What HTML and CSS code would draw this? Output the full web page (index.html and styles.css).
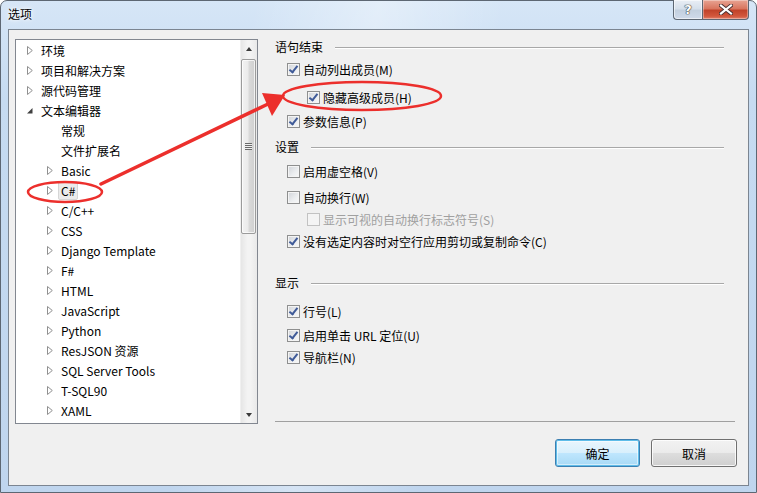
FILE: index.html
```html
<!DOCTYPE html>
<html lang="zh-CN">
<head>
<meta charset="utf-8">
<title>选项</title>
<link rel="stylesheet" href="styles.css">
</head>
<body>
<div class="window">
  <div class="titlebar">
    <span class="title">选项</span>
    <div class="caption-btns">
      <div class="cap-btn help"><span>?</span></div>
      <div class="cap-btn close">
        <svg width="14" height="11" viewBox="0 0 14 11"><path d="M2 1.5 L12 9.5 M12 1.5 L2 9.5" stroke="#4a3030" stroke-width="4" stroke-linecap="square"/><path d="M2 1.5 L12 9.5 M12 1.5 L2 9.5" stroke="#ffffff" stroke-width="2.2" stroke-linecap="square"/></svg>
      </div>
    </div>
  </div>
  <div class="client">
    <div class="tree">
      <div class="tree-list">
        <div class="node l1"><span class="tg"></span><span class="lbl">环境</span></div>
        <div class="node l1"><span class="tg"></span><span class="lbl">项目和解决方案</span></div>
        <div class="node l1"><span class="tg"></span><span class="lbl">源代码管理</span></div>
        <div class="node l1"><span class="tg open"></span><span class="lbl">文本编辑器</span></div>
        <div class="node l2"><span class="tg none"></span><span class="lbl">常规</span></div>
        <div class="node l2"><span class="tg none"></span><span class="lbl">文件扩展名</span></div>
        <div class="node l2"><span class="tg"></span><span class="lbl">Basic</span></div>
        <div class="node l2"><span class="tg"></span><span class="lbl sel">C#</span></div>
        <div class="node l2"><span class="tg"></span><span class="lbl">C/C++</span></div>
        <div class="node l2"><span class="tg"></span><span class="lbl">CSS</span></div>
        <div class="node l2"><span class="tg"></span><span class="lbl">Django Template</span></div>
        <div class="node l2"><span class="tg"></span><span class="lbl">F#</span></div>
        <div class="node l2"><span class="tg"></span><span class="lbl">HTML</span></div>
        <div class="node l2"><span class="tg"></span><span class="lbl">JavaScript</span></div>
        <div class="node l2"><span class="tg"></span><span class="lbl">Python</span></div>
        <div class="node l2"><span class="tg"></span><span class="lbl">ResJSON 资源</span></div>
        <div class="node l2"><span class="tg"></span><span class="lbl">SQL Server Tools</span></div>
        <div class="node l2"><span class="tg"></span><span class="lbl">T-SQL90</span></div>
        <div class="node l2"><span class="tg"></span><span class="lbl">XAML</span></div>
      </div>
      <div class="vscroll">
        <div class="sarrow up"></div>
        <div class="strack">
          <div class="thumb"><span class="grip"></span></div>
        </div>
        <div class="sarrow down"></div>
      </div>
    </div>

    <div class="pane">
      <div class="group-head g1"><span>语句结束</span><i></i></div>
      <div class="opt m4"><span class="cb on"></span><span>自动列出成员(M)</span></div>
      <div class="opt sub m8"><span class="cb on"></span><span>隐藏高级成员(H)</span></div>
      <div class="opt m4"><span class="cb on"></span><span>参数信息(P)</span></div>

      <div class="group-head m8"><span>设置</span><i></i></div>
      <div class="opt m6"><span class="cb"></span><span>启用虚空格(V)</span></div>
      <div class="opt m6"><span class="cb"></span><span>自动换行(W)</span></div>
      <div class="opt sub dis m2"><span class="cb"></span><span>显示可视的自动换行标志符号(S)</span></div>
      <div class="opt m2"><span class="cb on"></span><span>没有选定内容时对空行应用剪切或复制命令(C)</span></div>

      <div class="group-head m24"><span>显示</span><i></i></div>
      <div class="opt m10"><span class="cb on"></span><span>行号(L)</span></div>
      <div class="opt m4"><span class="cb on"></span><span>启用单击 URL 定位(U)</span></div>
      <div class="opt m2"><span class="cb on"></span><span>导航栏(N)</span></div>

      <div class="sep"></div>
      <div class="buttons">
        <div class="btn default">确定</div>
        <div class="btn">取消</div>
      </div>
    </div>
  </div>

  <svg class="annot" width="757" height="493" viewBox="0 0 757 493">
    <ellipse cx="65" cy="192" rx="37" ry="10" fill="none" stroke="#ec2f2c" stroke-width="2.5"/>
    <ellipse cx="362" cy="96" rx="79" ry="14" fill="none" stroke="#ec2f2c" stroke-width="2.5"/>
    <line x1="101" y1="184" x2="268" y2="104" stroke="#ec2f2c" stroke-width="3.5" stroke-linecap="round"/>
    <polygon points="285,95 262,93 272,116" fill="#ec2f2c"/>
  </svg>
</div>
</body>
</html>
```

FILE: styles.css
```css
* { box-sizing: border-box; }

html, body {
  margin: 0;
  padding: 0;
}

body {
  width: 757px;
  height: 493px;
  overflow: hidden;
  font-family: "Noto Sans CJK SC", "Microsoft YaHei", sans-serif;
  font-size: 12px;
  color: #000;
  background: #ffffff;
}

.window {
  position: relative;
  width: 757px;
  height: 493px;
  display: flex;
  flex-direction: column;
  border: 1px solid #5d6773;
  border-radius: 7px 7px 0 0;
  background:
    linear-gradient(100deg, rgba(255,255,255,0) 30%, rgba(255,255,255,0.35) 45%, rgba(255,255,255,0) 60%),
    linear-gradient(180deg, #d6e6f7 0%, #c6dbf1 20%, #bfd5ee 100%);
}

/* ---------- title bar ---------- */
.titlebar {
  height: 28px;
  display: flex;
  align-items: flex-start;
}

.title {
  margin: 5px 0 0 7px;
  line-height: 16px;
  font-size: 12px;
  color: #000;
  text-shadow: 0 0 6px #ffffff, 0 0 3px #ffffff;
}

.caption-btns {
  margin-left: auto;
  margin-right: 7px;
  margin-top: -1px;
  display: flex;
}

.cap-btn {
  height: 20px;
  display: flex;
  align-items: center;
  justify-content: center;
  border: 1px solid #5d6773;
  border-top: none;
}

.cap-btn.help {
  width: 29px;
  border-right: none;
  border-radius: 0 0 0 4px;
  background: linear-gradient(180deg, #e9eef5 0%, #d6e0eb 45%, #c3d0df 55%, #cfdaea 100%);
  box-shadow: inset 0 0 0 1px rgba(255,255,255,0.55);
}

.cap-btn.help span {
  font-family: "DejaVu Sans", sans-serif;
  font-weight: bold;
  font-size: 13px;
  color: #ffffff;
  text-shadow: 0 0 1px #333, 0 0 1px #333, 0 0 1px #333;
  line-height: 1;
}

.cap-btn.close {
  width: 47px;
  border-radius: 0 0 4px 0;
  background: linear-gradient(180deg, #e8a493 0%, #d9765f 45%, #c1432a 55%, #d2573c 85%, #e0806a 100%);
  box-shadow: inset 0 0 0 1px rgba(255,255,255,0.35);
}

/* ---------- client area ---------- */
.client {
  margin: 0 7px;
  height: 457px;
  display: flex;
  align-items: flex-start;
  padding: 9px 0 0 6px;
  gap: 17px;
  background: #f0f0f0;
  border: 1px solid #7b8591;
}

/* ---------- tree ---------- */
.tree {
  width: 243px;
  height: 385px;
  display: flex;
  border: 1px solid #828790;
  background: #ffffff;
}

.tree-list {
  flex: 1;
  padding-top: 0;
}

.node {
  height: 20px;
  display: flex;
  align-items: center;
  white-space: nowrap;
}

.node.l1 { padding-left: 11px; }
.node.l2 { padding-left: 31px; }

.tg {
  width: 6px;
  height: 9px;
  margin-right: 7px;
  flex: none;
  background: no-repeat center / 6px 9px url("data:image/svg+xml,%3Csvg xmlns='http://www.w3.org/2000/svg' width='6' height='9' viewBox='0 0 6 9'%3E%3Cpath d='M0.5 0.5 L5.3 4.5 L0.5 8.5 Z' fill='white' stroke='%23909090'/%3E%3C/svg%3E");
}

.tg.open {
  background: no-repeat center / 6px 9px url("data:image/svg+xml,%3Csvg xmlns='http://www.w3.org/2000/svg' width='6' height='9' viewBox='0 0 6 9'%3E%3Cpath d='M5.5 2 L5.5 7.5 L0 7.5 Z' fill='%23404040'/%3E%3C/svg%3E");
}

.tg.none { background: none; }

.lbl {
  line-height: 17px;
  padding: 0 2px;
  margin-left: -2px;
  border: 1px solid transparent;
}

.lbl.sel {
  background: #ebebeb;
  border-color: #d6d6d6;
  border-radius: 2px;
}

/* scrollbar */
.vscroll {
  width: 17px;
  height: 100%;
  display: flex;
  flex-direction: column;
  background: linear-gradient(90deg, #e6e6e6, #f3f3f3 40%, #f3f3f3 60%, #e9e9e9);
  border-left: 1px solid #f0f0f0;
}

.sarrow {
  height: 17px;
  display: flex;
  align-items: center;
  justify-content: center;
}

.sarrow::before {
  content: "";
  width: 0;
  height: 0;
  border-left: 3.5px solid transparent;
  border-right: 3.5px solid transparent;
}

.sarrow.up::before { border-bottom: 4px solid #3a3a3a; }
.sarrow.down::before { border-top: 4px solid #3a3a3a; }

.strack {
  flex: 1;
  padding-top: 2px;
}

.thumb {
  margin: 0 1px 0 0;
  height: 175px;
  display: flex;
  align-items: center;
  justify-content: center;
  border: 1px solid #9b9b9b;
  border-radius: 2px;
  background: linear-gradient(90deg, #f2f2f2 0%, #ebebeb 45%, #d9d9d9 55%, #cfcfcf 100%);
  box-shadow: inset 0 0 0 1px rgba(255,255,255,0.7);
}

.grip {
  width: 7px;
  height: 7px;
  background: repeating-linear-gradient(180deg, #6a6a6a 0 1px, #f0f0f0 1px 2px);
}

/* ---------- right pane ---------- */
.pane {
  width: 462px;
  display: flex;
  flex-direction: column;
}

.group-head {
  height: 16px;
  display: flex;
  align-items: center;
  line-height: 16px;
}

.group-head.g1 { margin-top: 0; }

.group-head i {
  flex: 1;
  margin: 1px 13px 0 12px;
  height: 2px;
  border-top: 1px solid #a8a8a8;
  border-bottom: 1px solid #ffffff;
}

.opt {
  height: 20px;
  display: flex;
  align-items: center;
  padding-left: 12px;
  white-space: nowrap;
}

.opt.sub { padding-left: 32px; }

.opt.dis { color: #a0a0a0; }

.m2 { margin-top: 2px; }
.m4 { margin-top: 4px; }
.m6 { margin-top: 6px; }
.m8 { margin-top: 8px; }
.m10 { margin-top: 10px; }
.m24 { margin-top: 24px; }

.cb {
  position: relative;
  width: 13px;
  height: 13px;
  margin-right: 3px;
  flex: none;
  border: 1px solid #8e8f8f;
  background: linear-gradient(135deg, #d0d3d8 0%, #eceef0 60%, #f8f8f8 100%);
  box-shadow: inset 0 0 0 1px #f4f4f4;
}

.opt.dis .cb {
  border-color: #c2c2c2;
  background: #f4f4f4;
  box-shadow: none;
}

.cb.on::after {
  content: "";
  position: absolute;
  left: 3px;
  top: 0px;
  width: 3px;
  height: 7px;
  border-right: 2px solid #3f5a98;
  border-bottom: 2px solid #3f5a98;
  transform: rotate(38deg);
}

.sep {
  margin-top: 54px;
  margin-right: 2px;
  height: 1px;
  background: #a0a0a0;
}

.buttons {
  margin-top: 17px;
  display: flex;
  justify-content: flex-end;
  gap: 11px;
}

.btn {
  width: 85px;
  height: 28px;
  display: flex;
  align-items: center;
  justify-content: center;
  border: 1px solid #707070;
  border-radius: 3px;
  background: linear-gradient(180deg, #f2f2f2 0%, #ebebeb 48%, #dddddd 52%, #cfcfcf 100%);
  box-shadow: inset 0 0 0 1px rgba(255,255,255,0.8);
}

.btn.default {
  border-color: #3c7fb1;
  background: linear-gradient(180deg, #eaf6fd 0%, #d9f0fc 48%, #bee6fd 52%, #a7d9f5 100%);
  box-shadow: inset 0 0 0 1px #5fbde9, inset 0 0 0 2px rgba(255,255,255,0.5);
}

.btn:last-child { width: 86px; }

/* ---------- annotations ---------- */
.annot {
  position: absolute;
  left: -1px;
  top: -1px;
  pointer-events: none;
}
```
